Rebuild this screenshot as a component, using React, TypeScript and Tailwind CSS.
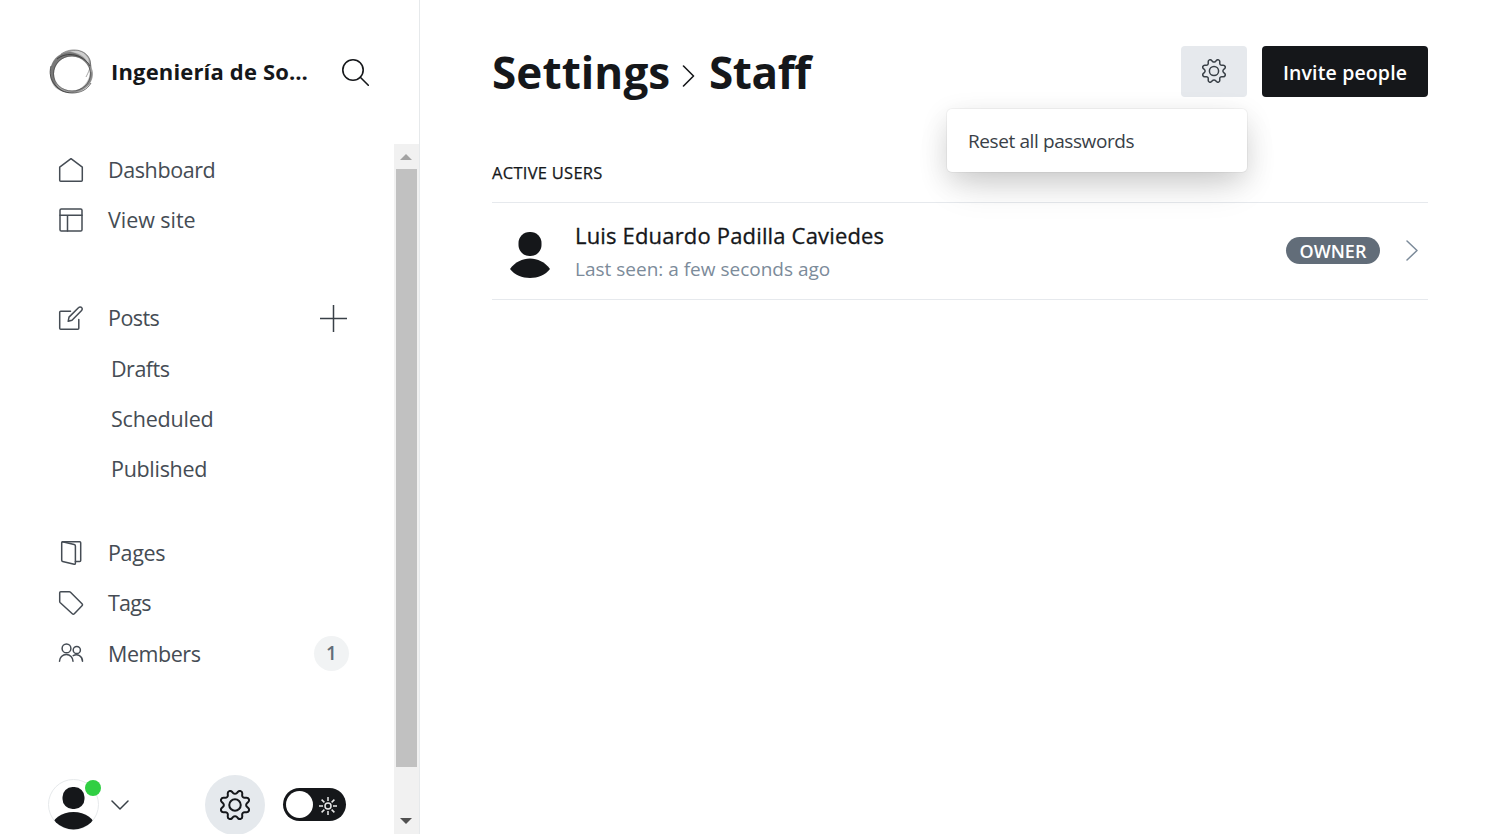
import type { ReactNode } from "react";

function Cog({ className, width }: { className: string; width: number }) {
  return (
    <svg viewBox="0 0 24 24" className={className} fill="none" stroke="currentColor" strokeWidth={width} strokeLinecap="round" strokeLinejoin="round">
      <path d="M10.546 2.438a1.957 1.957 0 0 0 2.908 0L14.4 1.4a1.959 1.959 0 0 1 3.41 1.413l-.071 1.4a1.958 1.958 0 0 0 2.051 2.054l1.4-.071A1.959 1.959 0 0 1 22.6 9.606l-1.042.94a1.96 1.96 0 0 0 0 2.909l1.042.94a1.959 1.959 0 0 1-1.413 3.41l-1.4-.071a1.958 1.958 0 0 0-2.056 2.056l.071 1.4A1.959 1.959 0 0 1 14.4 22.6l-.941-1.041a1.959 1.959 0 0 0-2.908 0L9.606 22.6A1.959 1.959 0 0 1 6.2 21.192l.072-1.4a1.958 1.958 0 0 0-2.056-2.056l-1.4.071A1.958 1.958 0 0 1 1.4 14.4l1.041-.94a1.96 1.96 0 0 0 0-2.909L1.4 9.606A1.958 1.958 0 0 1 2.809 6.2l1.4.071A1.958 1.958 0 0 0 6.267 4.211L6.2 2.81A1.959 1.959 0 0 1 9.606 1.4Z" />
      <circle cx="12" cy="12" r="4.6" />
    </svg>
  );
}

function NavIcon({ children }: { children: ReactNode }) {
  return (
    <svg viewBox="0 0 24 24" className="mb-px size-6 shrink-0 overflow-visible" fill="none" stroke="currentColor" strokeWidth="1.5" strokeLinecap="round" strokeLinejoin="round">
      {children}
    </svg>
  );
}

function NavItem({ icon, label, tracking, children }: { icon: ReactNode; label: string; tracking: string; children?: ReactNode }) {
  return (
    <a className="flex h-[50px] items-center pr-[45px] pl-[59px]">
      <NavIcon>{icon}</NavIcon>
      <span className={`ml-[25px] flex-1 ${tracking}`}>{label}</span>
      {children}
    </a>
  );
}

function Logo() {
  return (
    <svg viewBox="0 0 48 48" className="size-12 shrink-0" fill="none">
      <path
        fillRule="evenodd"
        fill="#6b6b6b"
        fillOpacity=".65"
        d="M13 6C22 0 34 1 39 7c4 4 4 9 5 14 2 4 1 12-4 17-7 7-18 9-27 5C5 40 1 31 2 22 3 15 7 9 13 6ZM24 8.500C14 8 6 16 6 26s8 16.500 18 16.500 18-7 18-16.500S34 9 24 8.500Z"
      />
      <path fill="#fff" fillOpacity=".5" d="M22 4c6-3 14-1 18 6 1 2 1 4 0 6C36 10 30 5 22 4Z" />
      <path fillRule="evenodd" fill="#333" fillOpacity=".35" d="M22 4C9 5 2 14 3 25c0 11 8 20 20 20C11 44 6 36 6 26S14 8 25 8c7 0 13 4 16 9C38 9 30 4 22 4Z" />
      <path fill="#555" fillOpacity=".35" d="M42 24c3-2 3 6-1 12-4 5-11 8-17 8 10-3 17-9 18-20Z" />
      <ellipse cx="24" cy="25.500" rx="18.500" ry="17.500" stroke="#333" strokeOpacity=".6" strokeWidth=".8" />
      <path d="M13 6C23-1 38 1 42 12c2 6-2 13-4 17" stroke="#444" strokeOpacity=".6" strokeWidth=".8" />
      <path d="M9 11c10-8 26-5 33 7M3 18C-1 32 10 45 24 45c8 0 15-3 19-10" stroke="#222" strokeOpacity=".65" strokeWidth="1" />
    </svg>
  );
}

export default function App() {
  return (
    <div className="flex h-[834px] w-[1500px] overflow-hidden bg-white font-['Open_Sans','Noto_Sans',sans-serif] text-[#15171a]">
      <aside className="flex w-[420px] shrink-0 flex-col border-r border-[#e6e9eb]">
        <header className="flex h-36 shrink-0 items-center pl-12">
          <Logo />
          <h2 className="-mt-0.5 ml-[15px] w-[204px] whitespace-nowrap text-[22px] font-bold tracking-[0.16px]">Ingeniería de So…</h2>
          <svg viewBox="0 0 28 28" className="ml-[26px] size-7" fill="none" stroke="currentColor" strokeWidth="1.6" strokeLinecap="round">
            <circle cx="12" cy="12" r="10.2" />
            <path d="m19.300 19.300 8 8" />
          </svg>
        </header>

        <div className="flex min-h-0 flex-1">
          <div className="flex w-[394px] flex-col">
            <nav className="pt-px text-[21.5px] text-[#454c54]">
              <NavItem label="Dashboard" tracking="tracking-[-0.4px]" icon={<path d="M.7 9.2v13.1c0 .6.4 1 1 1h20.6c.6 0 1-.4 1-1V9.2L12 .7Z" />} />
              <NavItem label="View site" tracking="tracking-[-0.05px]" icon={<><rect x="1" y="1" width="22" height="22" rx="1.3" /><path d="M1 7.2h22M8.5 7.2V23" /></>} />
              <div className="mt-12">
                <NavItem
                  label="Posts"
                  tracking="tracking-[-0.55px]"
                  icon={<><path d="M11.5 5.2H1.700a1 1 0 0 0-1 1v16.1a1 1 0 0 0 1 1h17.1a1 1 0 0 0 1-1V13.5" /><path d="m9.200 15.300.8-4.200L19.700 1.500a2 2 0 0 1 2.900 0 2 2 0 0 1 0 2.900L13 14.200Z" /></>}
                >
                  <svg viewBox="0 0 28 28" className="mr-0.5 size-7 text-[#394047]" fill="none" stroke="currentColor" strokeWidth="1.5">
                    <path d="M14.500 1v27M1 14.500h27" />
                  </svg>
                </NavItem>
              </div>
              <div className="mt-px pl-[111px] leading-[50px]">
                <a className="block tracking-[-0.5px]">Drafts</a>
                <a className="block tracking-[-0.2px]">Scheduled</a>
                <a className="block tracking-[-0.3px]">Published</a>
              </div>
              <div className="mt-[34px]">
                <NavItem label="Pages" tracking="tracking-[-0.35px]" icon={<><path d="M3.500.8 15.200 3.500q1.200.3 1.200 1.500v17.300q0 1.200-1.200.9L3.600 20.500q-.9-.2-.9-1.200V1.800q0-1 .8-1Z" /><path d="M3.500.8h17.200q1 0 1 1v17.600q0 1-1 1h-4.300" /></>} />
                <NavItem label="Tags" tracking="tracking-[-0.75px]" icon={<path d="M1.700.7h8.600q.7 0 1.200.5L23 12.700q1 1 0 2l-7.700 8q-1 1-2 0L1.300 11.700q-.6-.6-.6-1.300V1.700q0-1 1-1Z" />} />
                <NavItem label="Members" tracking="pt-[2px] tracking-[-0.45px]" icon={<><circle cx="7.500" cy="7.400" r="4.400" /><path d="M.5 20.300C.5 16.500 3.500 13.600 7.300 13.600s6.700 2.900 6.700 6.700" /><circle cx="17.800" cy="9" r="3.600" /><path d="M14.200 14.700c4.300-2.400 9.300.6 9.300 5.600" /></>}>
                  <span className="flex size-[35px] items-center justify-center rounded-full bg-[#f1f3f4] text-[19px] font-semibold text-[#626d79]">1</span>
                </NavItem>
              </div>
            </nav>
            <footer className="mt-auto flex h-[59px] items-center pl-12">
              <div className="relative size-[51px]">
                <svg viewBox="0 0 51 51" className="size-full">
                  <clipPath id="round-avatar"><circle cx="25.500" cy="25.500" r="25" /></clipPath>
                  <circle cx="25.500" cy="25.500" r="25" fill="#fff" stroke="#e6e9eb" />
                  <g fill="#15171a" clipPath="url(#round-avatar)">
                    <rect x="14.500" y="8" width="22" height="22" rx="10" />
                    <ellipse cx="25.500" cy="49" rx="22" ry="16" />
                  </g>
                </svg>
                <span className="absolute top-px right-[-2px] size-4 rounded-full bg-[#30cf43]" />
              </div>
              <svg viewBox="0 0 18 10" className="ml-3 h-2.5 w-[18px]" fill="none" stroke="#394047" strokeWidth="1.500" strokeLinecap="round" strokeLinejoin="round"><path d="m1 1 8 8 8-8" /></svg>
              <a className="ml-[76px] flex size-[60px] shrink-0 items-center justify-center rounded-full bg-[#e5e9ed]"><Cog className="size-[30px]" width={1.6} /></a>
              <div className="ml-[18px] flex h-[33px] w-[63px] items-center rounded-full bg-[#15171a] pl-[3px]">
                <span className="size-[27px] rounded-full bg-white" />
                <svg viewBox="0 0 20 20" className="mt-0.5 ml-[5px] size-5" fill="none" stroke="#fff" strokeOpacity=".9" strokeWidth="1.500">
                  <circle cx="10" cy="10" r="3" />
                  <path d="M10 1v4M10 15v4M1 10h4M15 10h4M3.600 3.600l2.800 2.800M13.600 13.600l2.800 2.800M3.600 16.400l2.800-2.800M13.600 6.400l2.800-2.800" />
                </svg>
              </div>
            </footer>
          </div>
          <div className="flex w-[25px] flex-col items-start bg-[#f1f1f1]">
            <svg viewBox="0 0 12 6" className="mt-2.5 ml-1.5 h-1.5 w-3 shrink-0"><path d="m0 6 6-6 6 6Z" fill="#a3a3a3" /></svg>
            <div className="mt-[9px] ml-0.5 h-[598px] w-[21px] bg-[#c1c1c1]" />
            <svg viewBox="0 0 12 6" className="mt-[51px] ml-1.5 h-1.5 w-3 shrink-0"><path d="m0 0 6 6 6-6Z" fill="#505050" /></svg>
          </div>
        </div>
      </aside>

      <main className="min-w-0 flex-1 px-[72px]">
        <header className="flex h-[144px] items-center">
          <h1 className="-mt-px flex items-center whitespace-nowrap text-[44px] font-bold">
            <span className="w-[178px] tracking-[0.1px]">Settings</span>
            <svg viewBox="0 0 13 22" className="mt-[9px] ml-3 h-[22px] w-[13px]" fill="none" stroke="currentColor" strokeWidth="1.600" strokeLinecap="round" strokeLinejoin="round"><path d="m1.500 1 10 10-10 10" /></svg>
            <span className="ml-[14px] tracking-[-0.400px]">Staff</span>
          </h1>
          <div className="relative mb-px ml-auto h-[52px] w-[66px]">
            <button className="flex h-[51px] w-[66px] items-center justify-center rounded-[4px] bg-[#e6e9ed] text-[#394047]"><Cog className="size-6" width={1.500} /></button>
            <div className="absolute top-[63px] right-0 flex h-[63px] w-[300px] items-center rounded-[5px] bg-white pl-[21px] text-[19px] tracking-[-0.4px] whitespace-nowrap text-[#394047] shadow-[0_0_0_1px_rgba(0,0,0,0.04),0_8px_28px_rgba(0,0,0,0.12),0_18px_40px_-8px_rgba(0,0,0,0.14)]"><span className="pt-0.5">Reset all passwords</span></div>
          </div>
          <button className="mb-0.5 ml-[15px] h-[51px] w-[166px] whitespace-nowrap rounded-[4px] bg-[#15171a] pt-[3px] text-[19.5px] font-semibold tracking-[0.15px] text-white">Invite people</button>
        </header>
        <section>
          <h3 className="flex h-[58px] items-center text-[16.5px] font-medium tracking-[0.28px] [-webkit-text-stroke:0.25px_#15171a]">ACTIVE USERS</h3>
          <article className="flex h-[98px] items-center border-y border-[#e6e9ed]">
            <svg viewBox="0 0 42 48" className="mt-[7px] ml-[17px] h-12 w-[42px]" fill="#15171a">
              <rect x="9.500" y="1" width="23" height="24" rx="11" />
              <path d="M1 38C11 24 31 24 41 38 32 50 10 50 1 38Z" />
            </svg>
            <div className="mt-[3px] ml-6 whitespace-nowrap">
              <h4 className="-mt-px mb-px text-[22px] leading-[33px] font-medium tracking-[0.17px] [-webkit-text-stroke:0.3px_#15171a]">Luis Eduardo Padilla Caviedes</h4>
              <p className="text-[19px] leading-[33px] text-[#7c8b9a]">Last seen: a few seconds ago</p>
            </div>
            <span className="mb-px ml-auto flex h-[27px] w-[94px] items-center justify-center rounded-full bg-[#626d79] pt-0.5 text-[18px] font-semibold text-white">OWNER</span>
            <svg viewBox="0 0 12 22" className="mr-2.5 mb-px ml-[26px] h-[22px] w-3" fill="none" stroke="#7c8b9a" strokeWidth="1.500" strokeLinecap="round" strokeLinejoin="round"><path d="m1 1 10 9.500-10 9.500" /></svg>
          </article>
        </section>
      </main>
    </div>
  );
}
